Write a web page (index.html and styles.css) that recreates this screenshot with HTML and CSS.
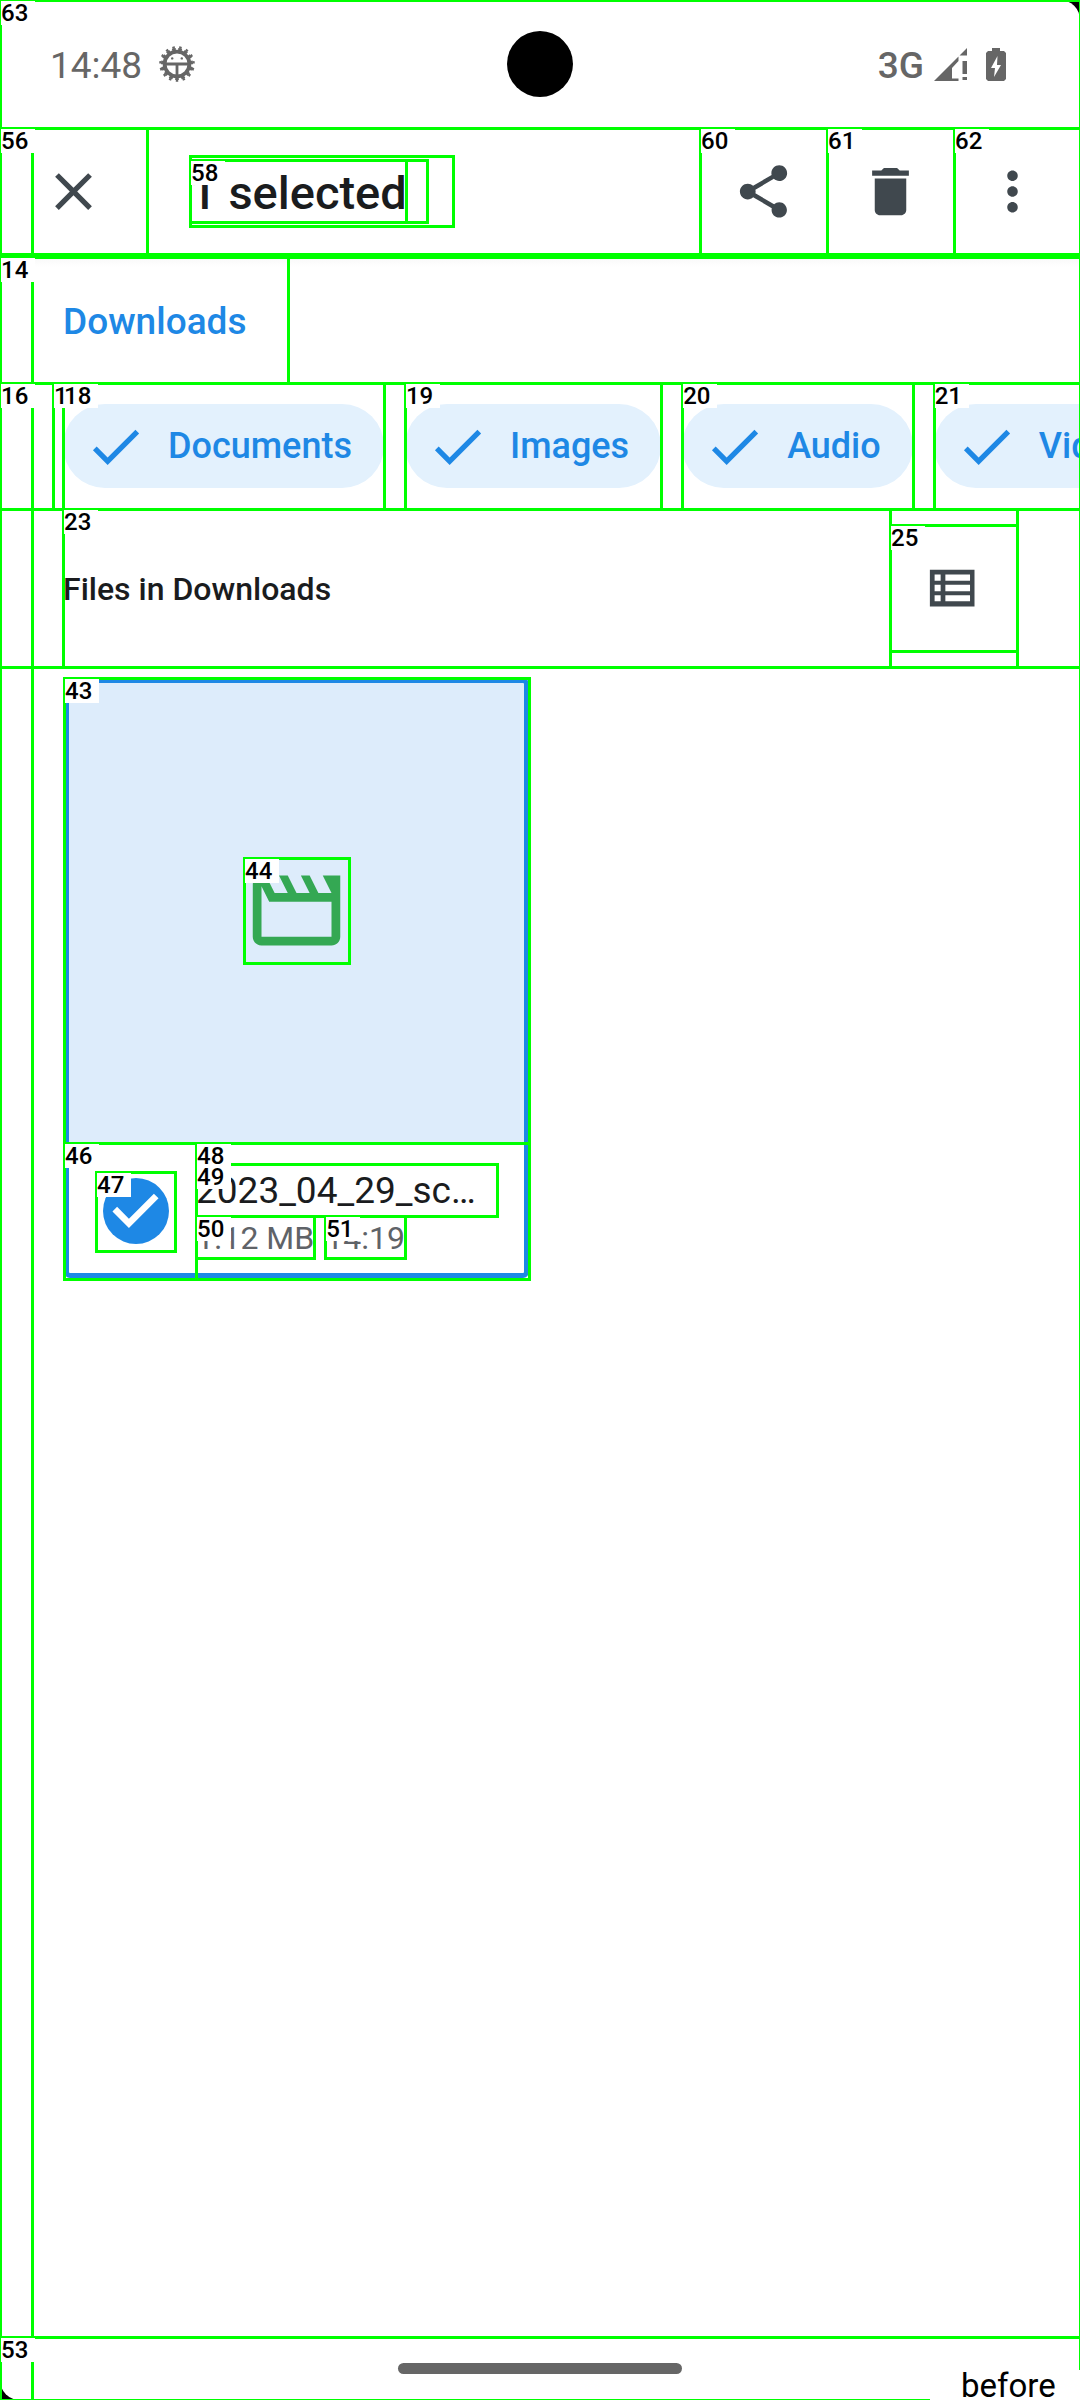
FILE: index.html
```html
<!DOCTYPE html>
<html lang="en">
<head>
<meta charset="utf-8">
<meta name="viewport" content="width=device-width, initial-scale=1">
<title>Files in Downloads</title>
<link rel="stylesheet" href="styles.css">
</head>
<body>
<div class="device">
  <div class="screen">
    <span class="frame"></span>

    <header class="status">
      <span class="frame"></span><span class="tag">63</span>
      <div class="status-side">
        <span class="status-text">14:48</span>
        <svg class="icon-debug" viewBox="0 0 36 36" aria-hidden="true">
          <g fill="none" stroke="#666">
            <circle cx="18" cy="18" r="12.400" stroke-width="3.800"/>
            <circle cx="18" cy="18" r="14.800" stroke-width="2.400" pathLength="150" stroke-dasharray="6 4" stroke-dashoffset="-4.500"/>
            <circle cx="18" cy="18" r="16.700" stroke-width="2.200" pathLength="150" stroke-dasharray="3.600 6.400" stroke-dashoffset="-5.700"/>
            <path d="M6 18h24M18 18v12" stroke-width="2.800"/>
          </g>
          <circle cx="13.200" cy="12.400" r="1.200" fill="#666"/><circle cx="22.800" cy="12.400" r="1.200" fill="#666"/>
        </svg>
      </div>
      <span class="camera"></span>
      <div class="status-side">
        <span class="status-text status-net">3G</span>
        <svg class="icon-signal" viewBox="0 0 33 33" fill="#666" aria-hidden="true">
          <path d="M0 33L24.5 8.5V13L18 20v10.5h6.500V33zM33 0v7.500h-7.500zM28.500 13H33v13h-4.500zM28.500 29H33v3h-4.500z"/>
        </svg>
        <svg class="icon-battery" viewBox="0 0 20 33" aria-hidden="true">
          <path fill="#666" d="M6 0h8v3h4l2 2v26l-2 2H2l-2-2V5l2-2h4z"/>
          <path fill="#fff" d="M11.500 8L5 20h4l-1 9 7-12h-4z"/>
        </svg>
      </div>
    </header>

    <div class="app">
      <span class="frame frame-content"></span>
      <div class="appbar">
        <span class="frame"></span><span class="tag">56</span>
        <button class="close" type="button" aria-label="Close">
          <span class="frame"></span>
          <svg class="icon" viewBox="0 0 24 24"><path d="M19 6.410L17.590 5 12 10.590 6.410 5 5 6.410 10.590 12 5 17.590 6.410 19 12 13.410 17.590 19 19 17.590 13.410 12z"/></svg>
        </button>
        <div class="title-box">
          <span class="frame"></span>
          <div class="title-wrap">
            <span class="frame"></span>
            <h1 class="title"><span class="frame"></span>1 selected</h1>
            <span class="tag">58</span>
          </div>
        </div>
        <div class="actions">
          <button class="action" type="button" aria-label="Share">
            <span class="frame"></span><span class="tag">60</span>
            <svg class="icon" viewBox="0 0 24 24"><path d="M18 16.080c-.76 0-1.440.3-1.960.77L8.910 12.700c.05-.23.09-.46.09-.7s-.04-.47-.09-.7l7.050-4.110c.54.5 1.250.81 2.040.81 1.660 0 3-1.340 3-3s-1.340-3-3-3-3 1.340-3 3c0 .24.04.47.09.7L8.040 9.810C7.500 9.310 6.790 9 6 9c-1.660 0-3 1.340-3 3s1.340 3 3 3c.79 0 1.500-.31 2.040-.81l7.120 4.160c-.05.21-.08.43-.08.65 0 1.610 1.310 2.920 2.920 2.920s2.920-1.310 2.920-2.920-1.310-2.920-2.920-2.920z"/></svg>
          </button>
          <button class="action" type="button" aria-label="Delete">
            <span class="frame"></span><span class="tag">61</span>
            <svg class="icon" viewBox="0 0 24 24"><path d="M6 19c0 1.100.9 2 2 2h8c1.100 0 2-.9 2-2V7H6v12zM19 4h-3.500l-1-1h-5l-1 1H5v2h14V4z"/></svg>
          </button>
          <button class="action action-more" type="button" aria-label="More options">
            <span class="frame"></span><span class="tag">62</span>
            <svg class="icon" viewBox="0 0 24 24"><path d="M12 8c1.100 0 2-.9 2-2s-.9-2-2-2-2 .9-2 2 .9 2 2 2zm0 2c-1.100 0-2 .9-2 2s.9 2 2 2 2-.9 2-2-.9-2-2-2zm0 6c-1.100 0-2 .9-2 2s.9 2 2 2 2-.9 2-2-.9-2-2-2z"/></svg>
          </button>
        </div>
      </div>

      <nav class="crumbs" aria-label="Path">
        <span class="frame"></span><span class="tag">14</span>
        <a class="crumb" href="#downloads"><span class="frame"></span>Downloads</a>
      </nav>

      <div class="filters">
        <span class="frame"></span><span class="tag">16</span>
        <div class="filter-list">
          <span class="frame"></span><span class="tag">17</span>
          <div class="chip-cell"><span class="frame"></span><span class="tag">18</span>
            <button class="chip" type="button" aria-pressed="true"><svg class="icon" viewBox="0 0 24 24"><path d="M9 16.170L4.830 12l-1.420 1.410L9 19 21 7l-1.410-1.410z"/></svg>Documents</button></div>
          <div class="chip-cell"><span class="frame"></span><span class="tag">19</span>
            <button class="chip" type="button" aria-pressed="true"><svg class="icon" viewBox="0 0 24 24"><path d="M9 16.170L4.830 12l-1.420 1.410L9 19 21 7l-1.410-1.410z"/></svg>Images</button></div>
          <div class="chip-cell"><span class="frame"></span><span class="tag">20</span>
            <button class="chip" type="button" aria-pressed="true"><svg class="icon" viewBox="0 0 24 24"><path d="M9 16.170L4.830 12l-1.420 1.410L9 19 21 7l-1.410-1.410z"/></svg>Audio</button></div>
          <div class="chip-cell"><span class="frame"></span><span class="tag">21</span>
            <button class="chip" type="button" aria-pressed="true"><svg class="icon" viewBox="0 0 24 24"><path d="M9 16.170L4.830 12l-1.420 1.410L9 19 21 7l-1.410-1.410z"/></svg>Videos</button></div>
        </div>
      </div>

      <div class="section">
        <span class="frame"></span>
        <h2 class="section-title"><span class="frame"></span><span class="tag">23</span>Files in Downloads</h2>
        <div class="view-cell">
          <span class="frame"></span>
          <button class="view" type="button" aria-label="List view">
            <span class="frame"></span><span class="tag">25</span>
            <svg class="icon" viewBox="0 0 24 24"><path fill-rule="evenodd" d="M3 4.900h17v14H3zM4.800 6.700v2.300h2.300V6.700zM8.900 6.700v2.300h9.400V6.700zM4.800 10.600v2.400h2.300v-2.400zM8.900 10.600v2.400h9.400v-2.400zM4.800 14.600v2.300h2.300v-2.300zM8.900 14.600v2.300h9.400v-2.300z"/></svg>
          </button>
        </div>
      </div>

      <main class="files">
        <article class="card">
          <span class="frame"></span><span class="tag">43</span>
          <div class="thumb">
            <div class="thumb-icon">
              <span class="frame"></span><span class="tag">44</span>
              <svg viewBox="0 0 24 24" fill="#34a853" aria-hidden="true"><path d="M4 6.470L5.760 10H20v8H4V6.470M22 4h-4l2 4h-3l-2-4h-2l2 4h-3l-2-4H8l2 4H7L5 4H4c-1.100 0-1.990.9-1.990 2L2 18c0 1.100.9 2 2 2h16c1.100 0 2-.9 2-2V4z"/></svg>
            </div>
          </div>
          <div class="info">
            <span class="frame"></span><span class="tag">46</span>
            <label class="pick">
              <span class="frame"></span><span class="tag">47</span>
              <input class="pick-input" type="checkbox" checked aria-label="Select file">
              <svg class="pick-mark" viewBox="0 0 24 24" fill="#fff" aria-hidden="true"><path d="M10 17l-5-5 1.410-1.410L10 14.170l7.590-7.590L19 8z"/></svg>
            </label>
            <div class="meta">
              <span class="frame"></span><span class="tag">48</span>
              <div class="name"><span class="frame"></span><span class="tag">49</span>2023_04_29_sc…</div>
              <div class="details">
                <span class="detail"><span class="frame"></span><span class="tag">50</span>1.12 MB</span>
                <span class="detail"><span class="frame"></span><span class="tag">51</span>14:19</span>
              </div>
            </div>
          </div>
        </article>
      </main>

      <footer class="navbar">
        <span class="frame"></span><span class="tag">53</span>
        <span class="handle"></span>
      </footer>
    </div>
    <span class="caption">before</span>
  </div>
</div>
</body>
</html>
```
FILE: styles.css
```css
* { box-sizing: border-box; }

body {
  margin: 0;
  background: #000;
  color: #1a1c1e;
  font-family: Roboto, "Liberation Sans", sans-serif;
}

button {
  border: 0;
  padding: 0;
  background: none;
  color: inherit;
  font: inherit;
}

svg { display: block; }

.device {
  position: relative;
  overflow: hidden;
}

.screen {
  position: relative;
  display: flex;
  flex-direction: column;
  min-height: 100vh;
  border-radius: 20px;
  background: #fff;
}

/* Element outlines and their number tags */
.frame {
  position: absolute;
  inset: -1px -2px -2px -1px;
  z-index: 2;
  border: 3px solid #0f0;
  pointer-events: none;
}

.frame-content { left: 31px; }

.tag {
  position: absolute;
  top: 1px;
  left: 1px;
  z-index: 3;
  width: 34px;
  height: 24px;
  background: #fff;
  color: #000;
  font-size: 24px;
  font-weight: 500;
  line-height: 24px;
  text-align: left;
}

.caption {
  position: absolute;
  right: 0;
  bottom: 0;
  z-index: 3;
  width: 150px;
  height: 30px;
  padding-left: 31px;
  background: #fff;
  color: #000;
  font-size: 33px;
  line-height: 32px;
}

/* Status bar */
.status {
  position: relative;
  display: flex;
  align-items: center;
  justify-content: space-between;
  height: 128px;
  padding: 0 74px 0 50px;
  color: #666;
}

.status-side {
  display: flex;
  align-items: center;
}

.status-text {
  padding-top: 4px;
  font-size: 37px;
  line-height: 44px;
}

.status-net { font-weight: 500; padding-right: 10px; }

.icon-debug { width: 36px; height: 36px; margin-left: 17px; }
.icon-signal { width: 33px; height: 33px; }
.icon-battery { width: 20px; height: 33px; margin-left: 19px; }

.camera {
  position: absolute;
  top: 31px;
  left: 50%;
  width: 66px;
  height: 66px;
  margin-left: -33px;
  border-radius: 50%;
  background: #000;
}

/* App bar */
.app {
  position: relative;
  flex: 1;
  display: flex;
  flex-direction: column;
}

.appbar {
  position: relative;
  display: flex;
  align-items: center;
  height: 126px;
  margin-bottom: 3px;
}

.icon {
  flex: none;
  width: 63px;
  height: 63px;
  fill: #40484e;
}

.close {
  position: relative;
  display: flex;
  align-items: center;
  justify-content: center;
  width: 147px;
  height: 126px;
}

.title-box {
  position: relative;
  width: 263px;
  margin-left: 43px;
  padding: 4px 0;
}

.title-wrap {
  position: relative;
  width: 237px;
}

.title {
  position: relative;
  width: 216px;
  margin: 0;
  padding-top: 3px;
  font-size: 47px;
  font-weight: 500;
  line-height: 59px;
  white-space: nowrap;
}

.actions {
  display: flex;
  margin-left: auto;
}

.action {
  position: relative;
  display: flex;
  align-items: center;
  justify-content: center;
  width: 127px;
  height: 126px;
}

.action-more { width: 126px; padding-right: 9px; }

/* Breadcrumb */
.crumbs {
  position: relative;
  display: flex;
  height: 126px;
  padding-left: 32px;
  background: linear-gradient(#f8f8f8, #fff 10px);
}

.crumb {
  position: relative;
  width: 256px;
  padding-left: 31px;
  color: #1e88e5;
  font-size: 37px;
  font-weight: 500;
  line-height: 130px;
  text-decoration: none;
}

/* Filter chips */
.filters {
  position: relative;
  height: 126px;
  padding-left: 53px;
}

.filter-list {
  position: relative;
  display: flex;
  gap: 21px;
  width: max-content;
  padding-left: 10px;
}

.chip-cell {
  position: relative;
  padding: 21px 0;
}

.chip {
  display: flex;
  align-items: center;
  gap: 21px;
  height: 84px;
  padding: 0 32px 0 21px;
  border-radius: 42px;
  background: #e3f1fd;
  color: #1e88e5;
  font-size: 36px;
  font-weight: 500;
}

.chip .icon { fill: #1e88e5; }

/* Section header */
.section {
  position: relative;
  display: flex;
  height: 158px;
  padding: 0 63px;
}

.section-title {
  position: relative;
  flex: 1;
  margin: 0;
  font-size: 32px;
  font-weight: 500;
  line-height: 160px;
}

.view-cell {
  position: relative;
  width: 127px;
  padding: 16px 0;
}

.view {
  position: relative;
  display: flex;
  align-items: center;
  justify-content: center;
  width: 127px;
  height: 126px;
}

/* File grid */
.files {
  flex: 1;
  padding: 11px 64px;
}

.card {
  position: relative;
  width: 465px;
}

.card::after {
  content: "";
  position: absolute;
  inset: 0 0 1px 0;
  z-index: 1;
  border: 5px solid #1e88e5;
  border-radius: 6px;
}

.thumb {
  display: flex;
  align-items: center;
  justify-content: center;
  height: 465px;
  background: #ddecfb;
}

.thumb-icon {
  position: relative;
  width: 105px;
  height: 105px;
}

.info {
  position: relative;
  display: flex;
  align-items: center;
  height: 136px;
  padding-left: 32px;
}

.pick {
  position: relative;
  display: grid;
  place-items: center;
  width: 79px;
  height: 79px;
}

.pick-input {
  grid-area: 1 / 1;
  appearance: none;
  width: 66px;
  height: 66px;
  margin: 0;
  border-radius: 50%;
  background: #1e88e5;
}

.pick-mark {
  grid-area: 1 / 1;
  z-index: 1;
  width: 79px;
  height: 79px;
}

.meta {
  position: relative;
  flex: 1;
  margin-left: 21px;
  padding: 21px 32px 21px 0;
}

.name {
  position: relative;
  height: 52px;
  font-size: 37px;
  line-height: 54px;
}

.details {
  display: flex;
  gap: 11px;
  height: 42px;
  color: #5f6368;
  font-size: 32px;
  line-height: 44px;
}

.detail { position: relative; }

/* Gesture bar */
.navbar {
  position: relative;
  display: flex;
  align-items: center;
  justify-content: center;
  height: 63px;
}

.handle {
  width: 284px;
  height: 11px;
  border-radius: 6px;
  background: #666;
}
```
